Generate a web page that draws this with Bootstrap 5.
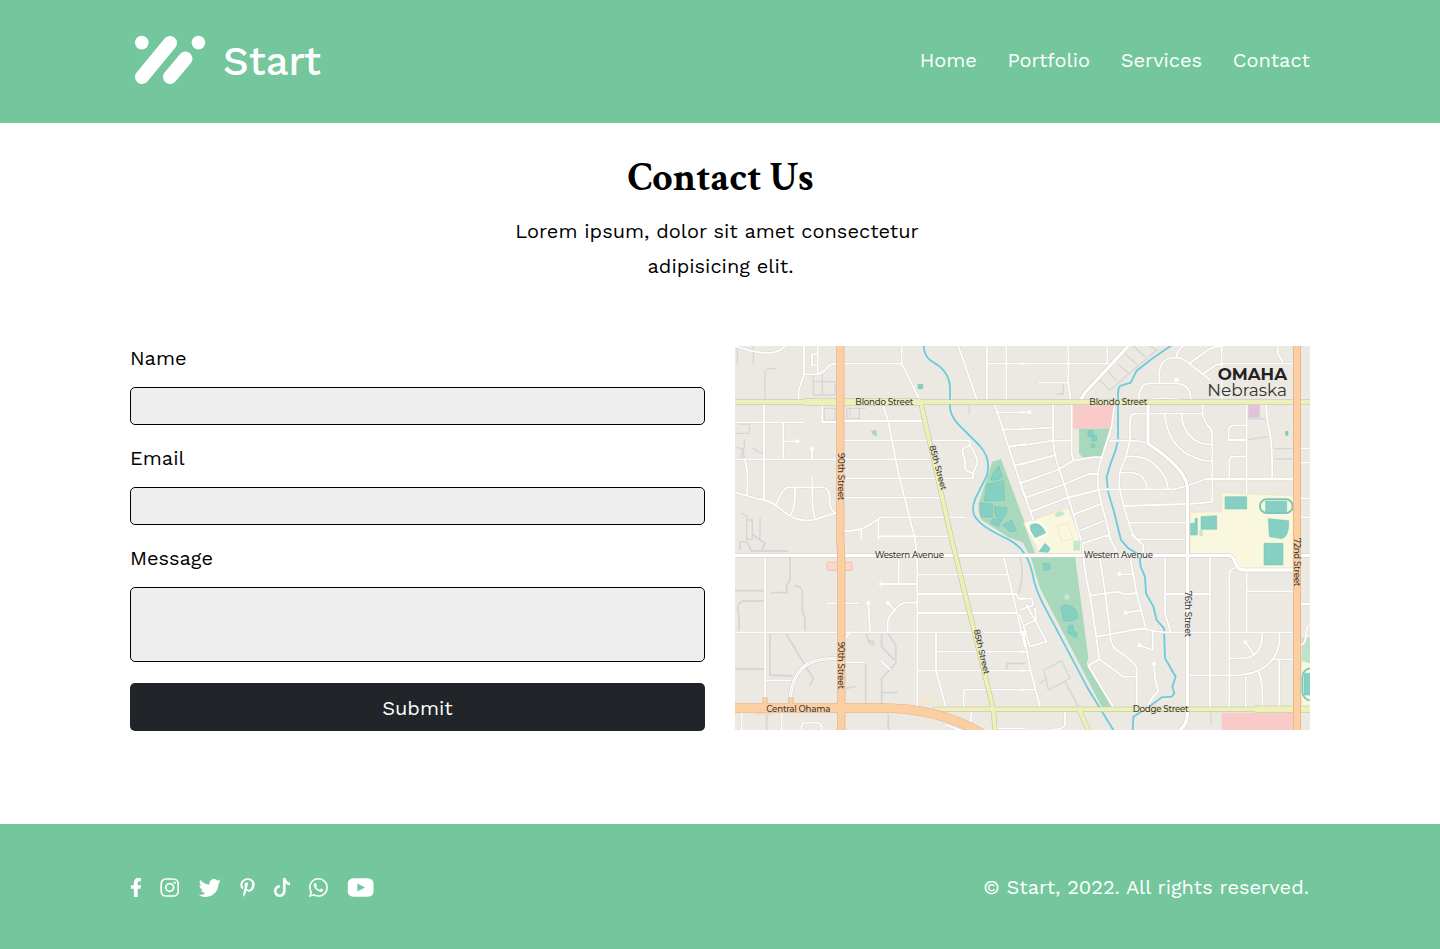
<!DOCTYPE html>
<html lang="en">
<head>
<meta charset="utf-8">
<meta name="viewport" content="width=device-width, initial-scale=1">
<title>Start - Contact</title>
<link href="https://cdn.jsdelivr.net/npm/bootstrap@5.3.0/dist/css/bootstrap.min.css" rel="stylesheet">
<style>
body{font-family:"Work Sans","Open Sans",sans-serif;font-size:20px;line-height:24px;color:#000;background:#fff}
.site-wrap{width:1180px;max-width:100%}
.site-bar{background:#74c79d;color:#fff}
.site-head{height:123px}
.site-foot{height:125px;padding-top:2px}
.brand-name{font-weight:500;font-size:40px;line-height:48px;padding-top:4px}
.brand-link{padding-bottom:3px}
.site-links{gap:30.6px;padding-bottom:4px}
.site-links a{color:#fff;padding:0}
.page-title{font-family:"Crimson Text","Liberation Serif",serif;font-weight:700;font-size:40px;line-height:48px;margin:0 0 12px;padding-left:1px}
.intro-block{padding-top:31px}
.intro{line-height:35px;margin-bottom:62px;padding-left:1px}
.intro span{padding-right:7px}
.field-box{display:block;height:38px;background:#eee;border:1px solid #000;border-radius:5px;margin-bottom:21px}
.field-box:focus{background:#eee;border-color:#000}
.field-tall{height:75px;resize:none}
.form-label{margin-bottom:17px;display:block}
.btn-send{height:48px;background:#212529;color:#fff;border-radius:5px;font-size:20px;border:0;padding:2px 0 0}
.contact-grid{--bs-gutter-x:30px;margin-bottom:93px}
.map-art{height:384px}
.copyright{padding:0 1px 2px 0}
/* social icons */
.social svg+svg{margin-left:19px}
/* map */
.map-art path,.map-art use{fill:none}
.lane path{stroke:inherit;stroke-linecap:round;stroke-linejoin:round}
.park{fill:#a9d9bc!important}.pitch{fill:#86cfc3!important;stroke:#68c2b5;stroke-width:1.5}
.school{fill:#f9f7de!important;stroke:#f8dcc0;stroke-width:2}.shop{fill:#f8cbc9!important}
.map-text{font-family:Montserrat,Inter,sans-serif;fill:#3b3b38;font-size:26px;font-weight:500}
</style>
</head>
<body>
<header class="site-bar site-head d-flex">
  <nav class="site-wrap mx-auto d-flex align-items-center justify-content-between">
    <a href="#" class="brand-link d-flex align-items-center text-white text-decoration-none">
      <svg width="93" height="52" viewBox="130 34 93 52" fill="#fff" stroke="#fff" stroke-linecap="round" aria-hidden="true">
        <g stroke="none"><circle cx="141.800" cy="42.600" r="6.800"/><circle cx="198.400" cy="42.600" r="6.800"/></g>
        <path d="M142 77L170 43M170 77L185.500 58.500" stroke-width="14"/>
      </svg>
      <span class="brand-name">Start</span>
    </a>
    <ul class="nav site-links">
      <li><a class="nav-link" href="#">Home</a></li>
      <li><a class="nav-link" href="#">Portfolio</a></li>
      <li><a class="nav-link" href="#">Services</a></li>
      <li><a class="nav-link" href="#">Contact</a></li>
    </ul>
  </nav>
</header>
<main class="site-wrap mx-auto">
  <div class="intro-block text-center">
    <h1 class="page-title">Contact Us</h1>
    <p class="intro"><span>Lorem ipsum, dolor sit amet consectetur</span><br>adipisicing elit.</p>
  </div>
  <div class="row contact-grid">
    <form class="col-6">
      <label class="form-label" for="name">Name</label>
      <input class="form-control field-box" id="name" type="text">
      <label class="form-label" for="email">Email</label>
      <input class="form-control field-box" id="email" type="email">
      <label class="form-label" for="message">Message</label>
      <textarea class="form-control field-box field-tall" id="message"></textarea>
      <button class="btn btn-send w-100 d-block" type="button">Submit</button>
    </form>
    <div class="col-6">
      <svg class="map-art w-100 d-block" viewBox="0 0 1725 1152" preserveAspectRatio="none" role="img" aria-label="Map of Omaha, Nebraska">
        <defs>
          <g id="streets" class="lane">
            <g transform="translate(0,-18)">
              <path d="M0 18Q70 43 110 38Q135 34 150 18M207 18V105L191 150V180M207 103H245Q263 100 275 85Q285 71 305 71M248 18V100M245 43H231V76H245M327 71H500V18M500 71L556 183M670 18L726 180M756 18V180M814 18V180M756 71H870M0 247H205M87 192V475M262 192V246H305M145 250V356M145 304H187M231 327V356M0 358H305M30 360Q41 400 36 463M0 457Q50 472 87 480Q115 488 135 506Q160 528 180 535Q210 545 240 539L305 518M123 492Q145 442 160 442H265Q285 443 284 480Q285 515 303 519M180 442Q182 505 166 525M232 410V490Q235 520 240 536M327 243H565M327 301H704M327 358H590M327 415H710M327 473H620M704 301V315L682 328Q684 350 690 360Q687 385 697 393L714 400V415M704 315Q728 350 727 370L715 398M327 573Q350 574 378 567Q400 560 437 532H690M379 568V600M430 540V600M430 589H540M443 192L460 245L490 400L541 600M778 190L870 472M783 217H870M802 268H870M820 321L870 312M841 376L870 369M858 427L870 424"/>
            </g>
            <g transform="translate(855,-18)">
              <path d="M0 71H145M145 18V130L155 200V340L160 362L220 352H244M262 18V71M145 71H290M55 128H145M0 217H28M99 193V300Q105 360 122 400Q145 470 183 600M0 268L99 262M0 317L99 302H152M0 374L102 346M0 430L112 390L160 362M18 472L128 435L205 402H235M34 514L140 474L235 450M0 425L40 540M160 524L240 493M183 570L251 543M270 302H330Q360 302 384 312M283 200L275 260L240 370Q228 410 236 450Q245 495 260 550L272 600M330 302L318 350L300 395Q296 430 299 448L310 495L330 560Q338 585 354 600M330 300V240Q330 222 350 221H545M235 448H460Q500 440 556 417H820M548 192V222Q550 240 565 258Q578 270 577 290V485Q545 490 500 492L310 498M325 548H500M318 350Q370 345 400 370Q445 410 443 446M300 398H335Q380 405 380 445M435 221Q438 290 490 335Q530 360 577 365M485 221Q485 270 525 300Q550 315 577 314M356 180Q356 130 390 130H470Q515 135 512 180M384 180Q430 170 485 180M418 130V95Q425 50 470 53Q490 53 510 72L570 120M470 53Q470 30 490 18M510 70L555 35Q580 18 605 18V180M548 103L580 80Q595 70 620 71H820M773 18V40L788 65M680 192V460M738 192Q740 240 750 280Q758 330 756 415M680 256H645Q626 256 626 270V300H680M680 350H640Q628 350 628 365V415M842 325H870M842 368H870M842 475H870M842 532H870"/>
            </g>
            <g transform="translate(0,567)">
              <path d="M90 65V490M0 292H870M430 4H650M275 205H370M491 65V146M438 147H545M400 205L405 290M459 205L480 225M545 203H510Q495 205 480 225Q458 245 458 265V290M538 0Q548 60 547 110V515M547 119H815M547 177H845L848 190H870M547 234H845M603 292V405L632 515M603 350H870M547 407H870M806 65L870 335M686 515V464H870M332 382H390M345 290L332 310M438 378L465 403M93 436H168M20 535V585M140 535V585M200 585Q195 563 215 563H245Q262 565 260 585M710 530L705 570M632 570L690 590M780 580H870"/>
            </g>
            <g transform="translate(855,567)">
              <path d="M188 25L265 0L290 50M188 25Q190 100 210 180L228 300L238 373L205 392L280 517M238 60L255 170L270 290Q270 330 290 345Q350 385 350 400V517M330 65L350 175L378 283M300 118H338M210 182L295 170Q315 182 348 174M318 233L360 226M228 305L315 290Q370 275 398 288L430 292H825M398 292V345L360 332M238 373L310 425H350M402 387L405 430L415 470Q390 490 384 515M335 0L370 30V60M358 13H500M435 65V235L452 290M435 177H570M570 65V517M628 292V120Q628 100 650 97M628 292V517M680 108V290M680 169H825M632 370H675Q728 360 727 292M677 322L700 356M508 421H650Q760 415 778 325V295M762 373H825M778 373V517M677 425V517M715 410Q730 435 727 517M842 207H870M842 330Q855 330 858 300Q860 270 870 270M135 530V570Q130 585 95 583M0 192L35 190L40 210L0 225M20 210L80 320L30 335L0 240M0 292L20 290M10 290L30 400L60 515M0 350H15M0 407H28M0 464H45M45 220L48 255L15 270"/>
            </g>
          </g>
          <path id="avenues" d="M0 628H1480Q1495 628 1500 650Q1508 672 1525 672H1675M1180 0L1050 140L1038 160M1239 175V293Q1355 370 1357 425V1110Q1355 1135 1335 1152M166 1055Q175 938 290 938H308M1697 629H1725"/>
        </defs>
        <rect width="1725" height="1152" fill="#ece9e2"/>
        <!-- service roads -->
        <g class="lane" stroke="#d5d6da" stroke-width="5.500">
          <g transform="translate(0,-18)"><path d="M7 20V70M55 20V70M90 180V95Q90 85 122 85M235 105V165H300V125H237M262 165V105M270 205H300V243H268V205M335 205H373V235H335V205M345 230V205H390M0 280H43V252H10M0 322L20 325Q30 340 25 360M28 300V320L15 355M55 325Q65 335 82 340M20 520Q40 525 35 540V598H52V540H35M75 532V600M703 195V222" stroke-width="4"/></g>
          <g transform="translate(855,-18)"><path d="M107 162H130V135M240 122L270 150L410 30L390 18M265 95L290 122M290 68L325 100M315 42L350 72M340 18L375 50M686 237H735M686 298L748 290M765 326H820M765 357H820M685 470L688 515L660 525" stroke-width="4"/></g>
          <g transform="translate(0,567)"><path d="M15 42V20H35L50 48H158M55 0L90 25L80 48M165 65V135L155 150V173H110M0 167H87M87 198H25Q0 205 12 240V285M180 152Q200 155 202 170V230L210 250V285M120 295H105V420L170 423M152 295L225 415L235 430L225 450M0 402H87M395 295L400 320Q410 335 417 325Q415 315 400 318M440 300V335L475 372M458 295L482 330V385L440 430V510M392 385V510M332 460L360 455M445 473H485M460 540V585M95 540V585M855 65Q870 120 850 175M815 400V385H870"/></g>
          <g transform="translate(855,567)"><path d="M72 405L125 377L150 430L85 465ZM60 445L80 430M135 440L175 515M622 0V20L632 50M573 535V570M703 90V103" stroke-width="4"/></g>
        </g>
        <!-- land use -->
        <g transform="translate(0,-18)">
          <path class="park" d="M772 365L798 357L870 550V610L820 592L740 540Q728 520 731 490ZM408 272L424 270L426 290L412 283Z"/>
          <path class="pitch" d="M792 377L802 412Q785 425 767 420Q775 390 792 377ZM755 433L806 422L809 481L748 483ZM735 489L772 492V532L738 530ZM778 500L817 503L812 525L797 542L780 525ZM775 535L800 542L790 560L767 548ZM802 556L830 540L845 573L825 575ZM549 133H563V146H549Z"/>
        </g>
        <g transform="translate(855,-18)">
          <path class="shop" d="M157 194H283L272 266H157Z"/>
          <path class="park" d="M177 266H272L244 352H187L177 340ZM0 530L15 560L45 640L30 650L0 590Z"/>
          <path style="fill:#e2c1da" d="M685 195H719V233H685Z"/>
          <path class="school" d="M10 548L145 504L183 600L185 645H60ZM510 517L605 515V458L820 467V695H655L635 652L510 640Z"/>
          <path class="pitch" d="M32 555Q60 540 78 580L40 595Q28 575 32 555ZM615 470H680V507H615ZM737 484H800V515H737ZM745 536L806 542Q808 590 785 596L748 590ZM543 530L590 527V568H543ZM512 550H525V535H532V585H512ZM732 610H789V675H732ZM797 274H804V286H797ZM203 272L218 270L222 287L205 290ZM217 290L230 287V302L215 303ZM214 312H225V322H214Z"/>
          <rect x="720" y="478" width="98" height="41" rx="20" fill="none" stroke="#79c9bb" stroke-width="6"/>
          <path d="M105 520L120 514L135 516L128 527L107 532ZM538 570H548V588H538Z" style="fill:#c5e6d0"/>
          <path d="M112 558L142 548L160 597L125 605Z" stroke="#f3dfc5" stroke-width="2"/>
          <path d="M22 560Q20 545 45 544Q75 548 82 580L45 600Z" stroke="#fff" stroke-width="5"/>
        </g>
        <g transform="translate(855,567)">
          <path class="park" d="M32 65L165 62L205 370L200 385L275 515H245L60 160Z"/>
          <path class="pitch" d="M75 25L90 40L85 52L57 50ZM68 85L90 87L92 102L72 107ZM122 215Q150 200 170 230L173 250Q150 265 130 255ZM146 272L160 270V285L173 295L168 308L142 293Z"/>
          <circle cx="141" cy="186" r="8" fill="#c5e6d0"/><rect x="160" y="17" width="20" height="30" fill="#c5e6d0"/>
          <path class="shop" d="M605 533H822V590H605Z"/><path class="school" d="M845 300H875V520H845Z"/><path d="M845 307H870V385L845 378Z" style="fill:#bfe2cb"/>
          <rect x="847" y="400" width="60" height="96" rx="26" fill="none" stroke="#79c9bb" stroke-width="5"/><path class="pitch" d="M852 415H875V480H852Z"/>
        </g>
        <g stroke="#6dcbdc" stroke-width="5.500" stroke-linecap="round">
          <path d="M566 0Q568 30 585 42L615 62Q645 90 645 125V187Q648 210 670 235L735 300Q770 340 755 390L720 460Q705 500 728 522Q745 545 820 580Q850 595 870 625Q885 650 893 685Q900 730 930 785L1060 1030L1135 1152"/>
          <path transform="translate(855,-18)" d="M452 18L398 55L350 92L332 128L300 138Q294 145 294 160V300L287 330L272 370L260 410L264 455L282 515L303 600L325 625L358 645L362 680L375 710L378 760L400 800L410 840L432 865L435 955L467 1010L457 1040L463 1060L455 1070L425 1072L385 1102L340 1130L338 1170"/>
        </g>
        <use href="#streets" stroke="#d8d5d0" stroke-width="8"/>
        <use href="#streets" stroke="#fff" stroke-width="5.500"/>
        <g fill="#fff"><circle cx="187" cy="286" r="6"/><circle cx="231" cy="309" r="6"/><circle cx="438" cy="714" r="6"/><circle cx="400" cy="771" r="6"/><circle cx="459" cy="771" r="6"/><circle cx="1325" cy="102" r="7"/><circle cx="1154" cy="685" r="6"/><circle cx="1172" cy="800" r="6"/><circle cx="1214" cy="898" r="6"/><circle cx="1257" cy="954" r="6"/><circle cx="1531" cy="889" r="6"/><circle cx="883" cy="199" r="6"/></g>
        <!-- through roads -->
        <use href="#avenues" stroke="#cfccc8" stroke-width="13"/>
        <use href="#avenues" stroke="#fff" stroke-width="10"/>
        <path d="M166 1055Q175 938 290 938H308" stroke="#d5d3d0" stroke-width="1.500"/>
        <g stroke="#bdc09a" stroke-width="15"><path d="M0 168H1725M557 168L650 580L775 1090L780 1152M1030 1085L1060 1152"/><path d="M598 1090H1725" stroke-linecap="round"/><path d="M210 168H555M1560 1090H1725" stroke-width="21"/></g>
        <g stroke="#eef0ba" stroke-width="12"><path d="M0 168H1725M557 168L650 580L775 1090L780 1152M1030 1085L1060 1152"/><path d="M598 1090H1725" stroke-linecap="round"/><path d="M210 168H555M1560 1090H1725" stroke-width="18"/></g>
        <rect x="276" y="648" width="75" height="25" rx="3" fill="#f8d9c5" stroke="#efb895" stroke-width="2"/>
        <path d="M60 1100H112V1107H60Z" style="fill:#f8d9c5"/>
        <path d="M558 1056H574V1068H558ZM576 1059H598V1065H576Z" style="fill:#fbe6b8"/>
        <g stroke="#e4ae84"><path d="M316 0V587L319 640V1152M1686 0V1152" stroke-width="24"/><path d="M0 1086H440Q610 1086 740 1162" stroke-width="29"/><path d="M90 1054V1085M168 1054V1085" stroke-width="15"/></g>
        <g stroke="#fccfa3"><path d="M316 0V587L319 640V1152M1686 0V1152" stroke-width="20"/><path d="M0 1086H440Q610 1086 740 1162" stroke-width="25"/><path d="M90 1054V1085M168 1054V1085" stroke-width="11"/></g>
        <g class="map-text">
          <text x="361" y="176" textLength="174">Blondo Street</text>
          <text x="1063" y="176" textLength="174">Blondo Street</text>
          <text x="419" y="635" textLength="208">Western Avenue</text>
          <text x="1046" y="635" textLength="208">Western Avenue</text>
          <text x="94" y="1097" textLength="192">Central Ohama</text>
          <text x="1193" y="1097" textLength="168">Dodge Street</text>
          <text transform="translate(309,321) rotate(90)" textLength="142">90th Street</text>
          <text transform="translate(309,887) rotate(90)" textLength="142">90th Street</text>
          <text transform="translate(1349,735) rotate(90)" textLength="138">76th Street</text>
          <text transform="translate(1677,576) rotate(90)" textLength="145">72nd Street</text>
          <text transform="translate(583,301) rotate(75)" textLength="138">85th Street</text>
          <text transform="translate(716,852) rotate(77)" textLength="138">85th Street</text>
          <text x="1448" y="101" font-size="49" font-weight="700" fill="#222" textLength="208" lengthAdjust="spacingAndGlyphs">OMAHA</text>
          <text x="1417" y="150" font-size="49" font-weight="400" fill="#333" textLength="239" lengthAdjust="spacingAndGlyphs">Nebraska</text>
        </g>
      </svg>
    </div>
  </div>
</main>
<footer class="site-bar site-foot d-flex">
  <div class="site-wrap mx-auto d-flex align-items-center justify-content-between">
    <div class="social d-flex align-items-center">
      <svg width="11" height="19" viewBox="0 0 290 512" fill="#fff" preserveAspectRatio="none"><path transform="translate(-2 0)" d="M279.140 288l14.220-92.660h-88.910v-60.130c0-25.350 12.420-50.060 52.240-50.060h40.420V6.260S260.430 0 225.360 0c-73.220 0-121.080 44.380-121.080 124.720v70.620H22.890V288h81.390v224h100.170V288z"/></svg>
      <svg width="19" height="19" viewBox="0 0 19 19" fill="none" stroke="#fff" stroke-width="1.700"><rect x="1.200" y="1" width="17" height="17" rx="4.800"/><circle cx="9.700" cy="9.500" r="3.900"/><circle cx="14.600" cy="4.700" r=".4"/></svg>
      <svg width="23" height="22" viewBox="-12 0 524 512" fill="#fff"><path d="M459.370 151.716c.325 4.548.325 9.097.325 13.645 0 138.720-105.583 298.558-298.558 298.558-59.452 0-114.680-17.219-161.137-47.106 8.447.974 16.568 1.299 25.340 1.299 49.055 0 94.213-16.568 130.274-44.832-46.132-.975-84.792-31.188-98.112-72.772 6.498.974 12.995 1.624 19.818 1.624 9.421 0 18.843-1.300 27.614-3.573-48.081-9.747-84.143-51.980-84.143-102.985v-1.299c13.969 7.797 30.214 12.670 47.431 13.319-28.264-18.843-46.781-51.005-46.781-87.391 0-19.492 5.197-37.360 14.294-52.954 51.655 63.675 129.300 105.258 216.365 109.807-1.624-7.797-2.599-15.918-2.599-24.040 0-57.828 46.782-104.934 104.934-104.934 30.213 0 57.502 12.670 76.670 33.137 23.715-4.548 46.456-13.320 66.599-25.340-7.798 24.366-24.366 44.833-46.132 57.827 21.117-2.273 41.584-8.122 60.426-16.243-14.292 20.791-32.161 39.308-52.628 54.253z"/></svg>
      <svg width="15" height="19" viewBox="0 0 384 512" fill="#fff"><path d="M204 6.500C101.400 6.500 0 74.900 0 185.600 0 256 39.600 296 63.600 296c9.900 0 15.600-27.600 15.600-35.400 0-9.300-23.700-29.100-23.700-67.800 0-80.400 61.200-137.400 140.400-137.400 68.100 0 118.500 38.700 118.500 109.800 0 53.100-21.300 152.700-90.300 152.700-24.900 0-46.200-18-46.200-43.800 0-37.800 26.400-74.400 26.400-113.400 0-66.200-93.900-54.200-93.900 25.800 0 16.800 2.100 35.400 9.600 50.700-13.800 59.400-42 147.900-42 209.100 0 18.900 2.700 37.500 4.500 56.400 3.400 3.800 1.700 3.400 6.900 1.500 50.400-69 48.600-82.500 71.400-172.800 12.300 23.400 44.100 36 69.300 36 106.200 0 153.900-103.500 153.900-196.800C384 71.300 298.200 6.500 204 6.500z"/></svg>
      <svg width="16" height="19" viewBox="1 0 14 16" fill="#fff" preserveAspectRatio="none"><path d="M9 0h1.980c.144.715.54 1.617 1.235 2.512C12.895 3.389 13.797 4 15 4v2c-1.753 0-3.070-.814-4-1.829V11a5 5 0 1 1-5-5v2a3 3 0 1 0 3 3V0Z" stroke="#fff" stroke-width=".3"/></svg>
      <svg width="19" height="19" viewBox="0 0 16 16" fill="#fff"><path d="M13.601 2.326A7.854 7.854 0 0 0 7.994 0C3.627 0 .068 3.558.064 7.926c0 1.399.366 2.760 1.057 3.965L0 16l4.204-1.102a7.933 7.933 0 0 0 3.790.965h.004c4.368 0 7.926-3.558 7.930-7.930A7.898 7.898 0 0 0 13.600 2.326zM7.994 14.521a6.573 6.573 0 0 1-3.356-.920l-.240-.144-2.494.654.666-2.433-.156-.251a6.560 6.560 0 0 1-1.007-3.505c0-3.626 2.957-6.584 6.591-6.584a6.560 6.560 0 0 1 4.660 1.931 6.557 6.557 0 0 1 1.928 4.660c-.004 3.639-2.961 6.592-6.592 6.592zm3.615-4.934c-.197-.099-1.170-.578-1.353-.646-.182-.065-.315-.099-.445.099-.133.197-.513.646-.627.775-.114.133-.232.148-.430.050-.197-.100-.836-.308-1.592-.985-.590-.525-.985-1.175-1.103-1.372-.114-.198-.011-.304.088-.403.087-.088.197-.232.296-.346.100-.114.133-.198.198-.330.065-.134.034-.248-.015-.347-.050-.099-.445-1.076-.612-1.470-.160-.389-.323-.335-.445-.340-.114-.007-.247-.007-.380-.007a.729.729 0 0 0-.529.247c-.182.198-.691.677-.691 1.654 0 .977.710 1.916.810 2.049.098.133 1.394 2.132 3.383 2.992.470.205.840.326 1.129.418.475.152.904.129 1.246.080.380-.058 1.171-.480 1.338-.943.164-.464.164-.860.114-.943-.049-.084-.182-.133-.380-.232z"/></svg>
      <svg width="27" height="19" viewBox="0 0 27 19"><path fill="#fff" fill-rule="evenodd" d="M7.500 .2H20Q26 .2 26.500 5V14Q26 18.800 20 18.800H7.500Q1.300 18.800 .8 14V5Q1.300 .2 7.500 .2ZM10.300 5.500V13.500L18.200 9.500Z"/></svg>
    </div>
    <span class="copyright">© Start, 2022. All rights reserved.</span>
  </div>
</footer>
<script src="https://cdn.jsdelivr.net/npm/bootstrap@5.3.0/dist/js/bootstrap.bundle.min.js"></script>
</body>
</html>
